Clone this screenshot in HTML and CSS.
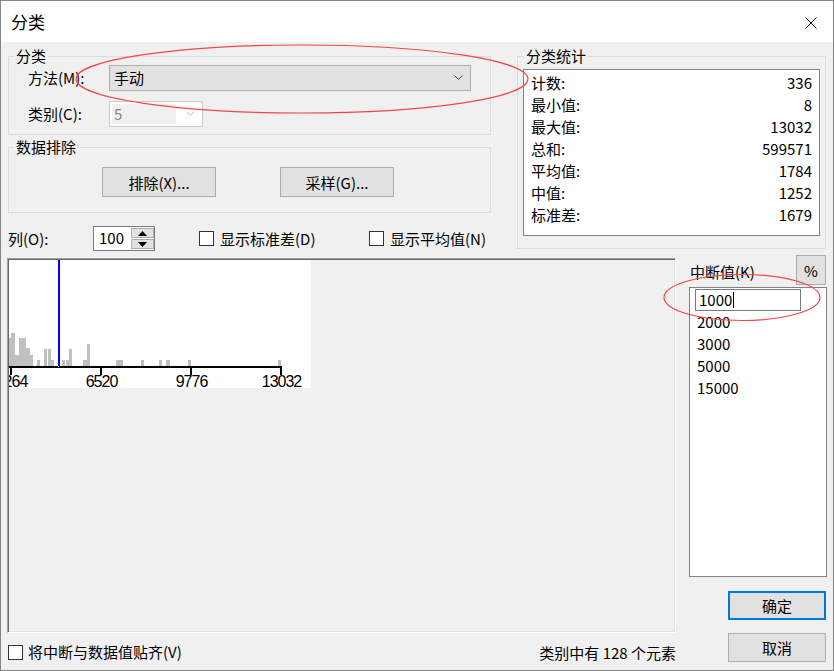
FILE: index.html
```html
<!DOCTYPE html>
<html lang="zh-CN">
<head>
<meta charset="utf-8">
<title>分类</title>
<link rel="stylesheet" href="styles.css">
</head>
<body>
<div class="window">
  <div class="titlebar">
    <span class="title">分类</span>
    <span class="close">
      <svg width="12" height="12" viewBox="0 0 12 12"><path d="M0.5 0.5 L11.5 11.5 M11.5 0.5 L0.5 11.5" stroke="#000" stroke-width="1" fill="none"/></svg>
    </span>
  </div>
  <div class="content">
    <div class="top">
      <div class="left-col">
        <fieldset class="group g1">
          <legend>分类</legend>
          <div class="g1-body">
            <div class="field-row">
              <span class="lbl">方法(M):</span>
              <div class="select"><span>手动</span>
                <svg width="10" height="6" viewBox="0 0 10 6"><polyline points="0.5,0.5 4.5,4.5 8.5,0.5" fill="none" stroke="#444" stroke-width="1"/></svg>
              </div>
            </div>
            <div class="field-row">
              <span class="lbl">类别(C):</span>
              <div class="combo"><span class="combo-val">5</span>
                <svg width="10" height="6" viewBox="0 0 10 6"><polyline points="0.5,0.5 4.5,4.5 8.5,0.5" fill="none" stroke="#bfbfbf" stroke-width="1"/></svg>
              </div>
            </div>
          </div>
        </fieldset>
        <fieldset class="group g2">
          <legend>数据排除</legend>
          <div class="g2-body">
            <button class="btn">排除(X)...</button>
            <button class="btn">采样(G)...</button>
          </div>
        </fieldset>
        <div class="opt-row">
          <span class="opt-lbl">列(O):</span>
          <div class="spin">
            <span class="spin-val">100</span>
            <div class="spin-btns">
              <span class="spin-btn"><svg width="9" height="5" viewBox="0 0 9 5"><polygon points="4.5,0 9,5 0,5" fill="#000"/></svg></span>
              <span class="spin-btn"><svg width="9" height="5" viewBox="0 0 9 5"><polygon points="0,0 9,0 4.5,5" fill="#000"/></svg></span>
            </div>
          </div>
          <label class="check check1"><span class="box"></span>显示标准差(D)</label>
          <label class="check"><span class="box"></span>显示平均值(N)</label>
        </div>
      </div>
      <fieldset class="group stats">
        <legend>分类统计</legend>
        <div class="stats-body">
          <div class="stats-box">
            <div class="stat"><span>计数:</span><span>336</span></div>
            <div class="stat"><span>最小值:</span><span>8</span></div>
            <div class="stat"><span>最大值:</span><span>13032</span></div>
            <div class="stat"><span>总和:</span><span>599571</span></div>
            <div class="stat"><span>平均值:</span><span>1784</span></div>
            <div class="stat"><span>中值:</span><span>1252</span></div>
            <div class="stat"><span>标准差:</span><span>1679</span></div>
          </div>
        </div>
      </fieldset>
    </div>
    <div class="bottom">
      <div class="main-col">
        <div class="hist">
          <svg class="chart" width="302" height="134" viewBox="0 0 302 134">
            <rect x="0" y="0" width="302" height="128" fill="#ffffff"/>
            <g fill="#c0c0c0">
              <rect x="0" y="78" width="2" height="28"/>
              <rect x="2" y="73" width="4" height="33"/>
              <rect x="6" y="95" width="4" height="11"/>
              <rect x="10" y="78" width="7" height="28"/>
              <rect x="17" y="88" width="4" height="18"/>
              <rect x="21" y="95" width="3" height="11"/>
              <rect x="28" y="100" width="3" height="6"/>
              <rect x="35" y="89" width="3" height="17"/>
              <rect x="39" y="89" width="3" height="17"/>
              <rect x="42" y="100" width="3" height="6"/>
              <rect x="53" y="100" width="3" height="6"/>
              <rect x="57" y="100" width="3" height="6"/>
              <rect x="60" y="89" width="3" height="17"/>
              <rect x="74" y="100" width="4" height="6"/>
              <rect x="78" y="84" width="3" height="22"/>
              <rect x="107" y="100" width="7" height="6"/>
              <rect x="132" y="100" width="3" height="6"/>
              <rect x="150" y="100" width="3" height="6"/>
              <rect x="157" y="100" width="4" height="6"/>
              <rect x="179" y="100" width="3" height="6"/>
              <rect x="269" y="100" width="3" height="6"/>
            </g>
            <rect x="49" y="0" width="2" height="106" fill="#0000ff"/>
            <g fill="#000">
              <rect x="0" y="106" width="273" height="2"/>
              <rect x="1" y="106" width="2" height="9"/>
              <rect x="91" y="106" width="2" height="9"/>
              <rect x="181" y="106" width="2" height="9"/>
              <rect x="271" y="106" width="2" height="9"/>
            </g>
            <rect x="49" y="106" width="1" height="1" fill="#ffff00"/>
            <g class="axis-lbl" text-anchor="middle">
              <text x="2.5" y="127">3264</text>
              <text x="92.5" y="127">6520</text>
              <text x="182.5" y="127">9776</text>
              <text x="272.5" y="127">13032</text>
            </g>
          </svg>
        </div>
        <div class="foot">
          <label class="check foot-check"><span class="box"></span>将中断与数据值贴齐(V)</label>
          <span class="count">类别中有 128 个元素</span>
        </div>
      </div>
      <div class="side-col">
        <div class="side-head">
          <span class="side-lbl">中断值(K)</span>
          <button class="btn pct">%</button>
        </div>
        <div class="breaks">
          <div class="break-edit"><span>1000</span><span class="caret"></span></div>
          <div class="break">2000</div>
          <div class="break">3000</div>
          <div class="break">5000</div>
          <div class="break">15000</div>
        </div>
        <button class="btn okbtn">确定</button>
        <button class="btn cancelbtn">取消</button>
      </div>
    </div>
  </div>
  <svg class="marks" width="834" height="671" viewBox="0 0 834 671">
    <ellipse cx="302" cy="79" rx="226" ry="34" fill="none" stroke="#f04848" stroke-width="1.2"/>
    <ellipse cx="742" cy="297.5" rx="78" ry="23" fill="none" stroke="#f04848" stroke-width="1.2"/>
  </svg>
</div>
</body>
</html>
```

FILE: styles.css
```css
* { box-sizing: border-box; }
html, body { margin: 0; padding: 0; }
body {
  background: #ffffff;
  font-family: "Noto Sans CJK SC", "Noto Sans", sans-serif;
  font-size: 15px;
  color: #000;
}
.window {
  position: relative;
  width: 834px;
  height: 671px;
  border: 1px solid #858585;
  background: #f0f0f0;
  display: flex;
  flex-direction: column;
  overflow: hidden;
}
.titlebar {
  flex: none;
  height: 41px;
  background: #ffffff;
  display: flex;
  align-items: center;
  justify-content: space-between;
}
.title { padding-left: 10px; font-size: 17px; line-height: 41px; }
.close { display: flex; margin-right: 16px; margin-top: 2px; }
.content { flex: 1; padding: 0 6px 0 7px; }

.top { display: flex; gap: 26px; margin-top: 5px; align-items: flex-start; }
.left-col { width: 483px; display: flex; flex-direction: column; }
.group { margin: 0; padding: 0; border: 1px solid #dcdcdc; min-width: 0; }
.group legend { padding: 0 2px; margin-left: 5px; line-height: 18px; font-size: 15px; }
.stats legend { margin-left: 6px; }
.g2 { margin-top: 3px; }

.g1-body { padding: 0 0 7px 19px; display: flex; flex-direction: column; gap: 10px; }
.field-row { display: flex; align-items: center; height: 26px; }
.lbl { width: 81px; line-height: 20px; }
.select {
  width: 362px; height: 26px;
  background: #e1e1e1; border: 1px solid #adadad;
  display: flex; align-items: center; justify-content: space-between;
  padding: 0 6px 0 4px; line-height: 20px;
}
.select svg, .combo svg { display: block; }
.combo {
  width: 94px; height: 26px;
  background: #ffffff; border: 1px solid #cccccc;
  display: flex; align-items: center; justify-content: space-between;
  padding: 0 6px 0 2px; color: #838383;
}
.combo-val { width: 64px; height: 20px; line-height: 20px; padding-left: 2px; background: #f0f0f0; }

.g2-body { padding: 11px 0 15px 93px; display: flex; gap: 64px; }
.btn {
  width: 114px; height: 30px;
  background: #e1e1e1; border: 1px solid #adadad;
  font: inherit; color: #000; padding: 0;
  display: flex; align-items: center; justify-content: center;
}

.opt-row { margin-top: 13px; height: 25px; display: flex; align-items: center; }
.opt-lbl { width: 85px; }
.spin { display: flex; width: 62px; height: 25px; border: 1px solid #7a7a7a; background: #fff; }
.spin-val { width: 37px; padding-left: 5px; line-height: 22px; }
.spin-btns { width: 23px; display: flex; flex-direction: column; gap: 1px; padding: 1px 0 1px 0; }
.spin-btn {
  flex: 1; background: #e1e1e1; border: 1px solid #adadad;
  display: flex; align-items: center; justify-content: center;
}
.spin-btn svg { display: block; }
.check { display: flex; align-items: center; gap: 6px; line-height: 20px; }
.box { flex: none; width: 15px; height: 15px; border: 1px solid #333333; background: #fff; }
.check1 { margin-left: 44px; width: 170px; }

.stats { width: 309px; }
.stats-body { padding: 4px 5px 12px 5px; }
.stats-box { height: 167px; background: #fff; border: 1px solid #828282; padding: 2px 7px 0 7px; }
.stat { display: flex; justify-content: space-between; height: 22px; line-height: 22px; }

.bottom { display: flex; gap: 13px; margin-top: 4px; }
.main-col { width: 669px; margin-left: -1px; padding-top: 3px; display: flex; flex-direction: column; }
.hist {
  height: 375px;
  border: 1px solid;
  border-color: #a0a0a0 #ffffff #ffffff #a0a0a0;
  box-shadow: inset 1px 1px 0 #696969, inset -1px -1px 0 #e3e3e3;
  padding: 1px;
}
.chart { display: block; }
.axis-lbl { font-family: "Liberation Sans", Arial, sans-serif; font-size: 16px; letter-spacing: -1px; fill: #000; }
.foot { margin-top: 8px; height: 22px; display: flex; align-items: center; justify-content: space-between; }
.foot-check { margin-left: 1px; gap: 5px; }

.side-col { width: 138px; display: flex; flex-direction: column; }
.side-head { height: 30px; display: flex; justify-content: space-between; align-items: center; }
.side-lbl { padding-left: 1px; margin-top: 3px; }
.pct { width: 30px; height: 30px; margin-right: 1px; }
.breaks { margin-top: 2px; height: 290px; background: #fff; border: 1px solid #828282; padding-top: 1px; }
.break-edit {
  margin-left: 5px; width: 106px; height: 22px;
  border: 1px solid #7a7a7a; padding-left: 3px;
  display: flex; align-items: center; line-height: 20px;
}
.caret { width: 1px; height: 16px; background: #000; margin-left: 1px; }
.break { padding-left: 7px; height: 22px; line-height: 22px; }
.okbtn { margin-top: 14px; align-self: flex-end; margin-right: 1px; width: 98px; height: 29px; border: 2px solid #0078d7; }
.cancelbtn { margin-top: 13px; align-self: flex-end; margin-right: 1px; width: 98px; height: 29px; }

.marks { position: absolute; top: -1px; left: -1px; pointer-events: none; }
```
